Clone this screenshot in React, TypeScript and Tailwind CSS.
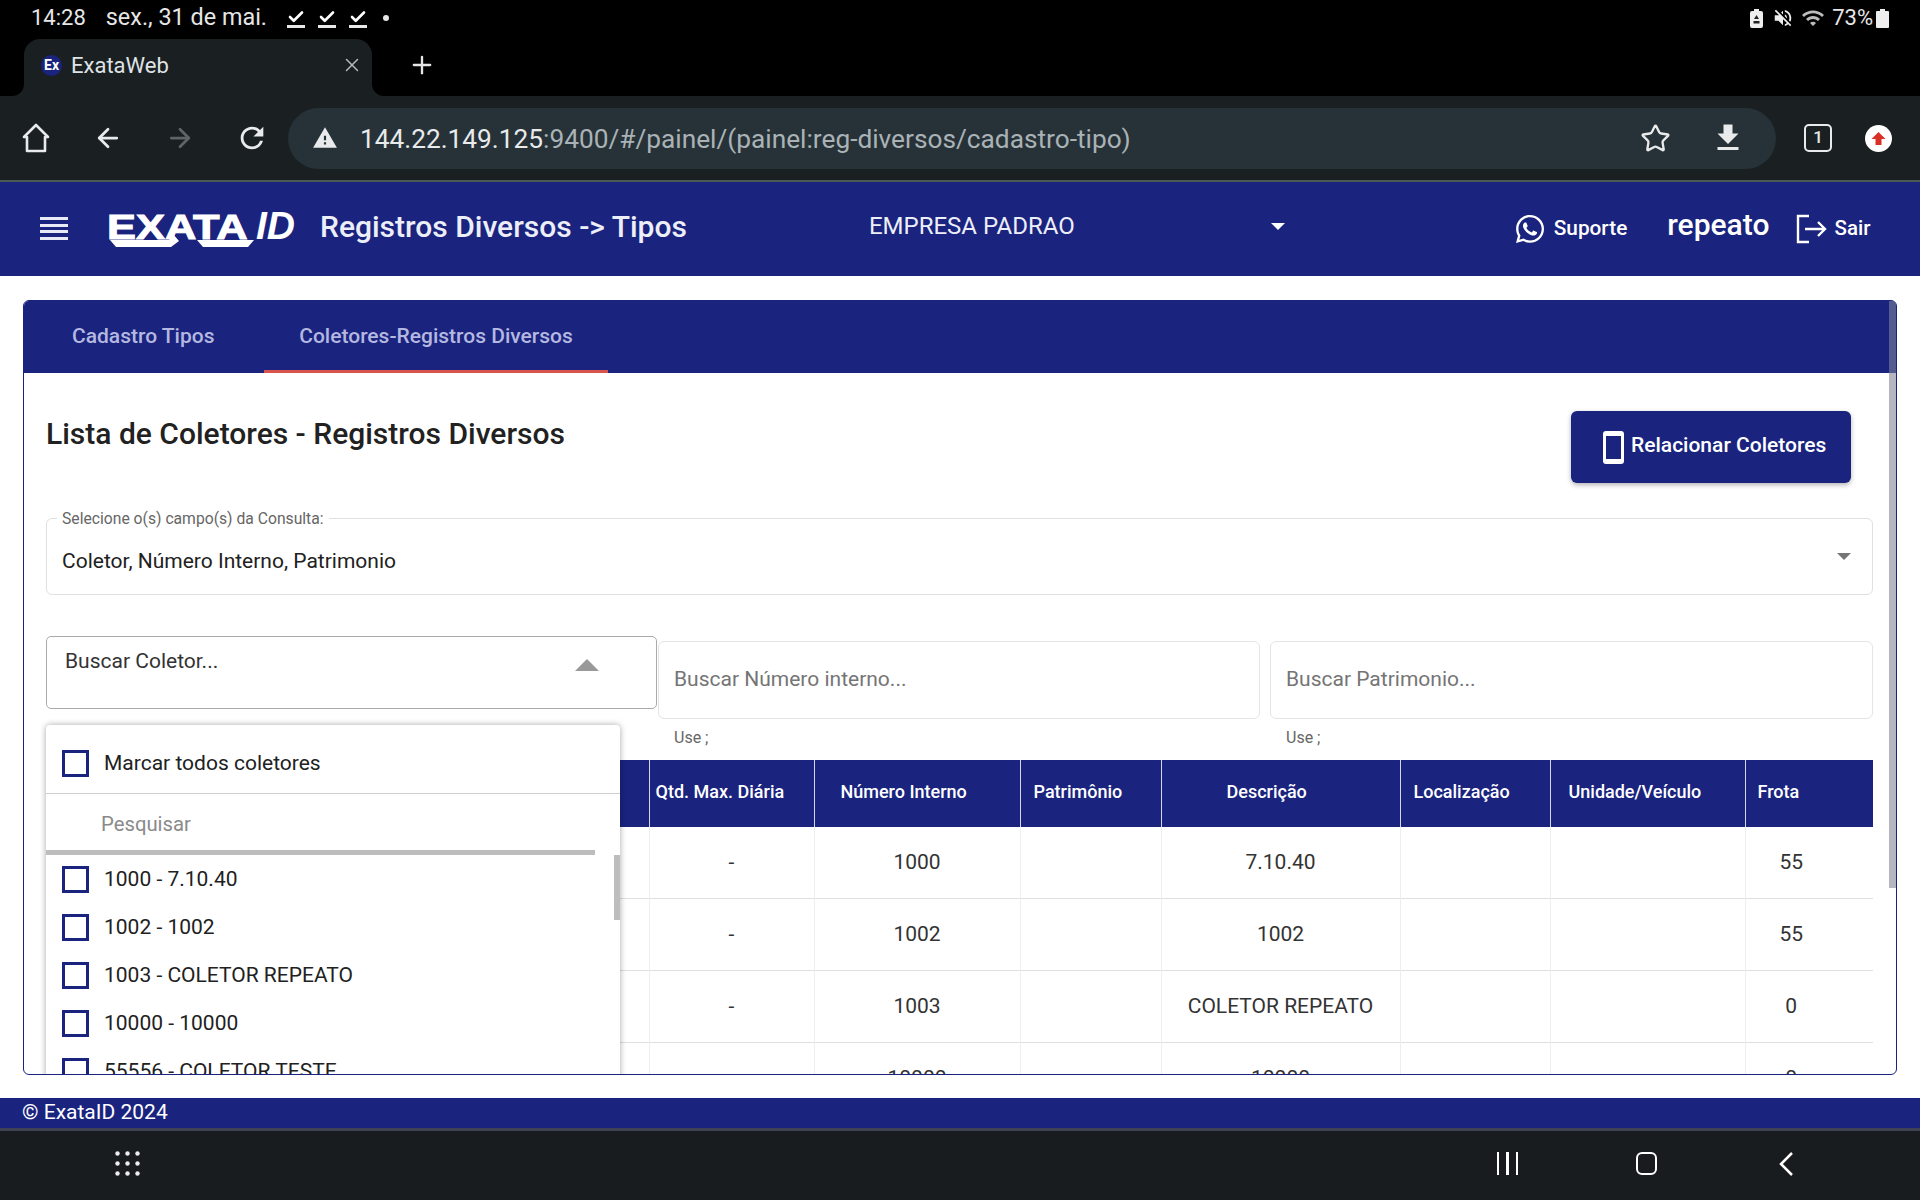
import React from "react";
import { FaWhatsapp } from "react-icons/fa";
import { MdFileDownload, MdRefresh, MdWarning, MdVolumeOff, MdWifi } from "react-icons/md";
import { Star, X, Plus, ArrowLeft, ArrowRight, Check } from "lucide-react";

const items = ["1000 - 7.10.40", "1002 - 1002", "1003 - COLETOR REPEATO", "10000 - 10000", "55556 - COLETOR TESTE"];
const rows = [
  ["-", "1000", "", "7.10.40", "", "", "55"],
  ["-", "1002", "", "1002", "", "", "55"],
  ["-", "1003", "", "COLETOR REPEATO", "", "", "0"],
  ["", "10000", "", "10000", "", "", "0"],
];

function Box() {
  return <span className="w-[27px] h-[27px] border-[3px] border-[#1a237e] shrink-0" />;
}

function StatusCheck() {
  return (
    <span className="flex flex-col items-center w-[18px]">
      <Check size={18} strokeWidth={3.5} className="text-white" />
      <span className="w-[18px] h-[3px] bg-[#e8e8e8] -mt-[1px]" />
    </span>
  );
}

function Logo() {
  return (
    <div className="relative w-[189px] h-[40px] ml-[39px] shrink-0 font-['Liberation_Sans',sans-serif] text-white">
      <span className="absolute left-0 top-[-2px] text-[35px] leading-[40px] font-bold origin-left scale-x-[1.24] [-webkit-text-stroke:1px_white]">EXATA</span>
      <span className="absolute left-[149px] top-[-3px] text-[39px] leading-[40px] italic font-bold">ID</span>
      <svg className="absolute left-0 top-0" width="150" height="40" viewBox="0 0 150 40" fill="#fff">
        <polygon points="3,31 62,31 62,31 66,25 72,32 64,38 9,38" />
        <polygon points="90,31 147,31 141,38 96,38" />
      </svg>
    </div>
  );
}

export default function App() {
  return (
    <div className="w-[1920px] h-[1200px] overflow-hidden flex flex-col bg-white font-[Roboto,sans-serif]">
      {/* status bar + tab strip */}
      <div className="h-[96px] bg-black shrink-0 flex flex-col">
        <div className="h-[39px] pb-[3px] flex items-center pl-[31px] pr-[31px] text-[#e6e6e6] text-[22px] leading-none">
          <span>14:28</span>
          <span className="ml-[20px] text-[23.4px]">sex., 31 de mai.</span>
          <span className="flex gap-[13px] ml-[20px]"><StatusCheck /><StatusCheck /><StatusCheck /></span>
          <span className="w-[6px] h-[6px] rounded-full bg-[#e6e6e6] ml-[16px]" />
          <span className="ml-auto flex items-center">
            <svg width="15" height="19" viewBox="0 0 15 19" fill="#eee">
              <path d="M5 0h5v2h2a2 2 0 0 1 2 2v13a2 2 0 0 1-2 2H3a2 2 0 0 1-2-2V4a2 2 0 0 1 2-2h2z" />
              <path d="M7.5 6l2.5 4H5zM4.5 12h6v2.5h-6z" fill="#222" />
            </svg>
            <MdVolumeOff size={22} className="ml-[8px] text-[#eee]" />
            <MdWifi size={24} className="ml-[7px] text-[#bbb]" />
            <span className="ml-[7px]">73%</span>
            <svg className="ml-[3px]" width="13" height="19" viewBox="0 0 13 19"><path d="M4 0h5v2h3a1 1 0 0 1 1 1v15a1 1 0 0 1-1 1H1a1 1 0 0 1-1-1V3a1 1 0 0 1 1-1h3z" fill="#eee" /></svg>
          </span>
        </div>
        <div className="flex-1 flex items-stretch pl-[24px]">
          <div className="relative w-[348px] pb-[5px] bg-[#1a1f22] rounded-t-[16px] flex items-center text-[#dfe3e6]">
            <svg className="absolute -left-[12px] bottom-0" width="12" height="12" viewBox="0 0 12 12"><path d="M12 0v12H0A12 12 0 0 0 12 0z" fill="#1a1f22" /></svg>
            <svg className="absolute -right-[12px] bottom-0" width="12" height="12" viewBox="0 0 12 12"><path d="M0 0v12h12A12 12 0 0 1 0 0z" fill="#1a1f22" /></svg>
            <span className="ml-[17px] w-[21px] h-[21px] rounded-full bg-[#1a237e] text-white text-[14px] font-bold flex items-center justify-center">Ex</span>
            <span className="ml-[9px] text-[22px]">ExataWeb</span>
            <X size={22} strokeWidth={1.6} className="ml-auto mr-[9px] text-[#b5b9bc]" />
          </div>
          <Plus size={28} strokeWidth={2} className="ml-[36px] mt-[12px] text-[#e6e6e6]" />
        </div>
      </div>

      {/* toolbar */}
      <div className="h-[86px] bg-[#1a1f22] shrink-0 flex items-center border-b-2 border-[#4a5a52] text-[#e8eaeb]">
        <svg className="ml-[22px]" width="28" height="30" viewBox="0 0 28 30" fill="none" stroke="#e8eaeb" strokeWidth="2.6" strokeLinejoin="round"><path d="M14 2 2 14v0h3v14h18V14h3z" /></svg>
        <ArrowLeft size={30} strokeWidth={2.2} className="ml-[43px]" />
        <ArrowRight size={30} strokeWidth={2.2} className="ml-[42px] text-[#5f6467]" />
        <MdRefresh size={34} className="ml-[40px]" />
        <div className="ml-[19px] w-[1488px] h-[61px] rounded-full bg-[#263238] flex items-center">
          <MdWarning size={26} className="ml-[24px]" />
          <span className="ml-[22px] mt-[3px] text-[26.25px] text-[#e8eaeb]">144.22.149.125<span className="text-[#aab2b6]">:9400/#/painel/(painel:reg-diversos/cadastro-tipo)</span></span>
          <Star size={31} strokeWidth={1.8} className="ml-auto" />
          <MdFileDownload size={36} className="ml-[39px] mr-[30px]" />
        </div>
        <span className="ml-[28px] w-[28px] h-[28px] rounded-[5px] border-2 border-[#e8eaeb] flex items-center justify-center text-[17px] font-medium">1</span>
        <span className="ml-[33px] w-[27px] h-[27px] rounded-full bg-white flex items-center justify-center">
          <svg width="15" height="15" viewBox="0 0 15 15" fill="#d93025"><path d="M7.5 1 14.5 8H10.5V14H4.5V8H.5z" /></svg>
        </span>
      </div>

      {/* app header */}
      <div className="h-[94px] pb-[1px] bg-[#1a237e] shrink-0 flex items-center text-white">
        <div className="ml-[40px] w-[28px] flex flex-col gap-[3.5px] shrink-0">
          <span className="h-[3px] bg-[#e8eaf6]" /><span className="h-[3px] bg-[#e8eaf6]" /><span className="h-[3px] bg-[#e8eaf6]" /><span className="h-[3px] bg-[#e8eaf6]" />
        </div>
        <Logo />
        <span className="ml-[24px] -mt-[4px] text-[30px] font-medium text-[#eceef8] whitespace-nowrap">Registros Diversos -&gt; Tipos</span>
        <span className="ml-[182px] -mt-[5px] text-[24px] text-[#eceef8]">EMPRESA PADRAO</span>
        <span className="ml-[196px] -mt-[4px] w-0 h-0 border-x-[7px] border-x-transparent border-t-[7px] border-t-white" />
        <FaWhatsapp size={32} className="ml-[229px]" />
        <span className="ml-[8px] text-[20.8px] font-medium">Suporte</span>
        <span className="ml-[40px] -mt-[9px] text-[30px] font-medium">repeato</span>
        <svg className="ml-[27px]" width="31" height="30" viewBox="0 0 31 30" fill="none" stroke="#fff" strokeWidth="2.4"><path d="M13 2H2v26h11M9 15h20M22 8l7 7-7 7" /></svg>
        <span className="ml-[7px] text-[20.5px] font-medium">Sair</span>
      </div>

      {/* main */}
      <div className="flex-1 min-h-0 pt-[24px] pb-[23px] px-[23px] flex">
        <div className="relative w-full h-[775px] rounded-[6px] border border-[#1a237e] overflow-hidden flex flex-col">
          <div className="h-[72px] bg-[#1a237e] shrink-0 flex pl-[12px] text-[21px] font-medium text-[#b4b8e0]">
            <span className="w-[228px] flex items-center pl-[36px] border-y-[3px] border-transparent">Cadastro Tipos</span>
            <span className="w-[344px] flex items-center justify-center border-y-[3px] border-t-transparent border-b-[#d9534f]">Coletores-Registros Diversos</span>
          </div>

          <div className="absolute right-0 top-0 w-[7px] h-[72px] bg-[#535b8f]" />
          <div className="absolute right-0 top-[72px] w-[7px] h-[515px] bg-[#b6b6c2]" />

          <div className="relative flex-1 min-h-0 pl-[22px] pr-[23px] overflow-hidden">
            <div className="flex justify-between items-start pt-[38px]">
              <h1 className="mt-[3px] text-[30px] leading-[40px] font-medium text-[#212121]">Lista de Coletores - Registros Diversos</h1>
              <button className="mr-[22px] w-[280px] h-[72px] rounded-[6px] bg-[#1a237e] text-white text-[21px] font-medium flex items-center pl-[32px] shadow-[0_2px_5px_rgba(0,0,0,0.3)]">
                <span className="w-[21px] h-[33px] rounded-[3px] border-x-[3px] border-t-[5px] border-b-[5px] border-white mr-[7px]" />
                <span className="-mt-[2px]">Relacionar Coletores</span>
              </button>
            </div>

            <div className="relative mt-[35px] h-[77px] border border-[#e0e0e0] rounded-[6px] flex items-center justify-between px-[15px] pt-[10px]">
              <span className="absolute left-[10px] -top-[9px] bg-white px-[5px] text-[15.7px] leading-[18px] text-[#666]">Selecione o(s) campo(s) da Consulta:</span>
              <span className="text-[21px] text-[#212121]">Coletor, Número Interno, Patrimonio</span>
              <span className="mr-[6px] -mt-[10px] w-0 h-0 border-x-[7px] border-x-transparent border-t-[7px] border-t-[#757575]" />
            </div>

            <div className="mt-[41px] h-[124px] flex items-start relative">
              <div className="w-[611px] h-[73px] border border-[#aaa] rounded-[5px] flex items-start justify-between pl-[18px] pr-[57px] pt-[9px] text-[21px] text-[#333] shrink-0">
                <span>Buscar Coletor...</span>
                <span className="mt-[13px] w-0 h-0 border-x-[12px] border-x-transparent border-b-[12px] border-b-[#999]" />
              </div>
              <div className="ml-[1px] mt-[5px] w-[602px] shrink-0">
                <div className="h-[78px] border border-[#e5e5e5] rounded-[6px] flex items-center px-[15px] text-[21px] text-[#757575]">Buscar Número interno...</div>
                <div className="mt-[10px] pl-[16px] text-[16px] leading-[18px] text-[#666]">Use ;</div>
              </div>
              <div className="ml-[10px] mt-[5px] w-[603px] shrink-0">
                <div className="h-[78px] border border-[#e5e5e5] rounded-[6px] flex items-center px-[15px] text-[21px] text-[#757575]">Buscar Patrimonio...</div>
                <div className="mt-[10px] pl-[16px] text-[16px] leading-[18px] text-[#666]">Use ;</div>
              </div>
            </div>

            <table className="w-[1827px] table-fixed border-collapse">
              <colgroup>
                <col className="w-[603px]" /><col className="w-[165px]" /><col className="w-[206px]" /><col className="w-[141px]" /><col className="w-[239px]" /><col className="w-[150px]" /><col className="w-[195px]" /><col className="w-[128px]" />
              </colgroup>
              <thead>
                <tr className="h-[67px] bg-[#1a237e] text-white text-[18px] font-medium">
                  <th className="border-r border-[#d5d7e8]" />
                  <th className="border-r border-[#d5d7e8] font-medium text-left pl-[6px] pb-[5px] whitespace-nowrap">Qtd. Max. Diária</th>
                  <th className="border-r border-[#d5d7e8] font-medium text-left pl-[26px] pb-[5px]">Número Interno</th>
                  <th className="border-r border-[#d5d7e8] font-medium text-left pl-[13px] pb-[5px]">Patrimônio</th>
                  <th className="border-r border-[#d5d7e8] font-medium text-left pl-[65px] pb-[5px]">Descrição</th>
                  <th className="border-r border-[#d5d7e8] font-medium text-left pl-[13px] pb-[5px]">Localização</th>
                  <th className="border-r border-[#d5d7e8] font-medium text-left pl-[18px] pb-[5px]">Unidade/Veículo</th>
                  <th className="font-medium text-left pl-[12px] pb-[5px]">Frota</th>
                </tr>
              </thead>
              <tbody className="text-[21px] text-[#333]">
                {rows.map((r, i) => (
                  <tr key={i} className={i === 0 ? "h-[71px] border-b border-[#e0e0e0]" : "h-[72px] border-b border-[#e0e0e0]"}>
                    <td className="border-r border-[#eeeeee]" />
                    {r.map((c, j) => (
                      <td key={j} className={j === 6 ? "text-center pr-[36px] pt-[1px]" : "text-center pt-[1px] border-r border-[#eeeeee]"}>{c}</td>
                    ))}
                  </tr>
                ))}
              </tbody>
            </table>

            {/* open dropdown */}
            <div className="absolute left-[22px] top-[352px] w-[574px] h-[360px] bg-white rounded-t-[4px] shadow-[0_0_6px_rgba(0,0,0,0.35)] flex flex-col">
              <div className="h-[69px] shrink-0 border-b border-[#cfcfcf] flex items-center gap-[15px] pl-[16px] pt-[8px] text-[21px] text-[#212121]">
                <Box /><span className="mt-[2px]">Marcar todos coletores</span>
              </div>
              <div className="h-[56px] pt-[5px] shrink-0 flex items-center pl-[55px] text-[20.3px] text-[#8a8a8a]">Pesquisar</div>
              <div className="h-[5px] w-[549px] shrink-0 bg-[#bdbdbd]" />
              <div className="relative flex-1 pt-[11px] flex flex-col gap-[21px]">
                <div className="absolute right-0 top-0 w-[6px] h-[65px] bg-[#bdbdbd]" />
                {items.map((t) => (
                  <div key={t} className="h-[27px] flex items-center gap-[15px] pl-[16px] text-[21px] text-[#212121]"><Box /><span className="mt-[1px]">{t}</span></div>
                ))}
              </div>
            </div>
          </div>
        </div>
      </div>

      {/* footer */}
      <div className="h-[30px] bg-[#1a237e] shrink-0 flex items-center pl-[22px] text-white text-[21px]">© ExataID 2024</div>
      <div className="flex-1 min-h-[72px] max-h-[72px] bg-[#181c1f] border-t-[3px] border-[#3e4254] pb-[4px] flex items-center text-white">
        <svg className="ml-[115px]" width="25" height="25" viewBox="0 0 25 25" fill="#eee">
          {[2.5, 12.5, 22.5].flatMap((y) => [2.5, 12.5, 22.5].map((x) => <circle key={`${x}-${y}`} cx={x} cy={y} r="2.2" />))}
        </svg>
        <span className="ml-auto flex gap-[7px]"><span className="w-[2.5px] h-[23px] bg-white" /><span className="w-[2.5px] h-[23px] bg-white" /><span className="w-[2.5px] h-[23px] bg-white" /></span>
        <span className="ml-[118px] w-[21px] h-[23px] rounded-[6px] border-[2.5px] border-white" />
        <svg className="ml-[122px] mr-[127px]" width="14" height="24" viewBox="0 0 14 24" fill="none" stroke="#fff" strokeWidth="2.5"><path d="M13 1 2 12l11 11" /></svg>
      </div>
    </div>
  );
}
